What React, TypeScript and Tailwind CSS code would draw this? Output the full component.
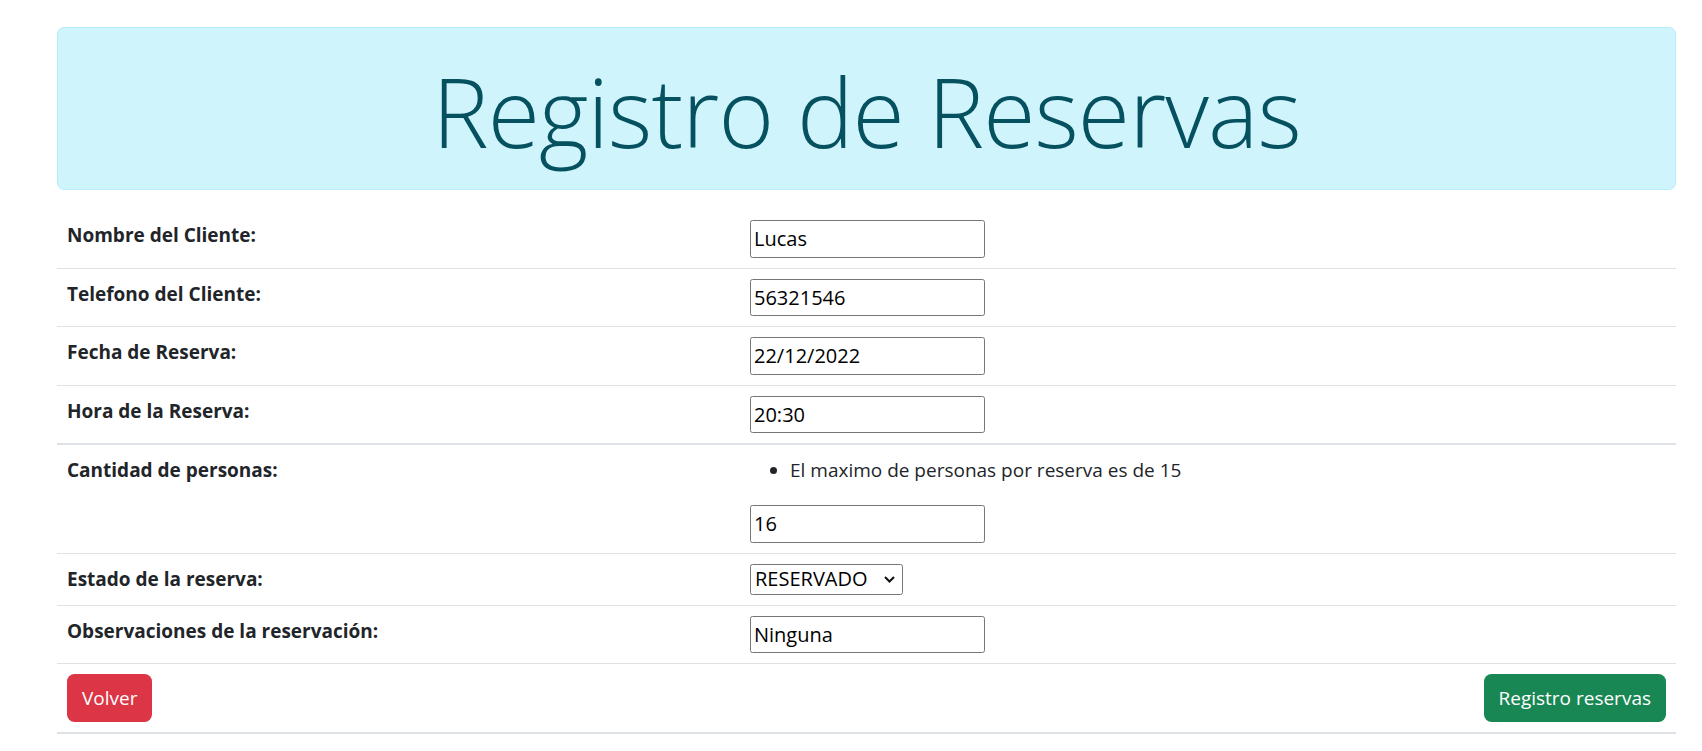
import { useState } from "react";

const font = { fontFamily: '"Open Sans", "Noto Sans", sans-serif' };

function Row({
  label,
  children,
  thick = false,
}: {
  label: string;
  children: React.ReactNode;
  thick?: boolean;
}) {
  return (
    <div
      className={`grid grid-cols-[683px_1fr] border-[#dee2e6] ${thick ? "border-b-2" : "border-b"}`}
    >
      <div className="px-[10px] pt-[10px]">
        <span className="text-[19px] font-bold leading-[30px] text-[#212529]">{label}</span>
      </div>
      <div className="px-[10px] py-[10px]">{children}</div>
    </div>
  );
}

function TextInput({ value }: { value: string }) {
  const [v, setV] = useState(value);
  return (
    <input
      value={v}
      onChange={(e) => setV(e.target.value)}
      className="block h-[37.5px] w-[235px] rounded-[2.5px] border border-[#767676] bg-white pl-[3px] text-[20px] text-black outline-none"
    />
  );
}

export default function App() {
  return (
    <div className="min-h-screen bg-white" style={font}>
      <div className="ml-[57px] w-[1619px] pt-[27px]">
        <div className="flex h-[163px] justify-center rounded-[7px] border border-[#b6effb] bg-[#cff4fc] pt-[36px]">
          <h1 className="text-[95px] font-light leading-none tracking-[-0.9px] text-[#055160]">
            Registro de Reservas
          </h1>
        </div>

        <div className="mt-[20px]">
          <Row label="Nombre del Cliente:">
            <TextInput value="Lucas" />
          </Row>
          <Row label="Telefono del Cliente:">
            <TextInput value="56321546" />
          </Row>
          <Row label="Fecha de Reserva:">
            <TextInput value="22/12/2022" />
          </Row>
          <Row label="Hora de la Reserva:" thick>
            <TextInput value="20:30" />
          </Row>
          <Row label="Cantidad de personas:">
            <ul className="mb-[20px] list-disc pl-[40px] text-[19px] leading-[30px] text-[#212529]">
              <li>El maximo de personas por reserva es de 15</li>
            </ul>
            <TextInput value="16" />
          </Row>
          <Row label="Estado de la reserva:">
            <div className="relative w-[153px]">
              <select
                defaultValue="RESERVADO"
                className="block h-[31px] w-[153px] appearance-none rounded-[2.5px] border border-[#767676] bg-white pl-[4px] text-[20px] leading-none text-black outline-none"
              >
                <option>RESERVADO</option>
                <option>CONFIRMADO</option>
                <option>CANCELADO</option>
              </select>
              <svg
                className="pointer-events-none absolute right-[8px] top-[12px] h-[7px] w-[11px]"
                viewBox="0 0 11 7"
                fill="none"
                stroke="#111"
                strokeWidth="2"
              >
                <path d="M1 1l4.5 4.5L10 1" />
              </svg>
            </div>
          </Row>
          <Row label="Observaciones de la reservación:">
            <TextInput value="Ninguna" />
          </Row>

          <div className="flex items-center justify-between border-b-2 border-[#dee2e6] p-[10px]">
            <button className="h-[47.5px] rounded-[7.5px] bg-[#dc3545] px-[15px] text-[19px] text-white">
              Volver
            </button>
            <button className="h-[47.5px] rounded-[7.5px] bg-[#198754] px-[15px] text-[19px] text-white">
              Registro reservas
            </button>
          </div>
        </div>
      </div>
    </div>
  );
}
